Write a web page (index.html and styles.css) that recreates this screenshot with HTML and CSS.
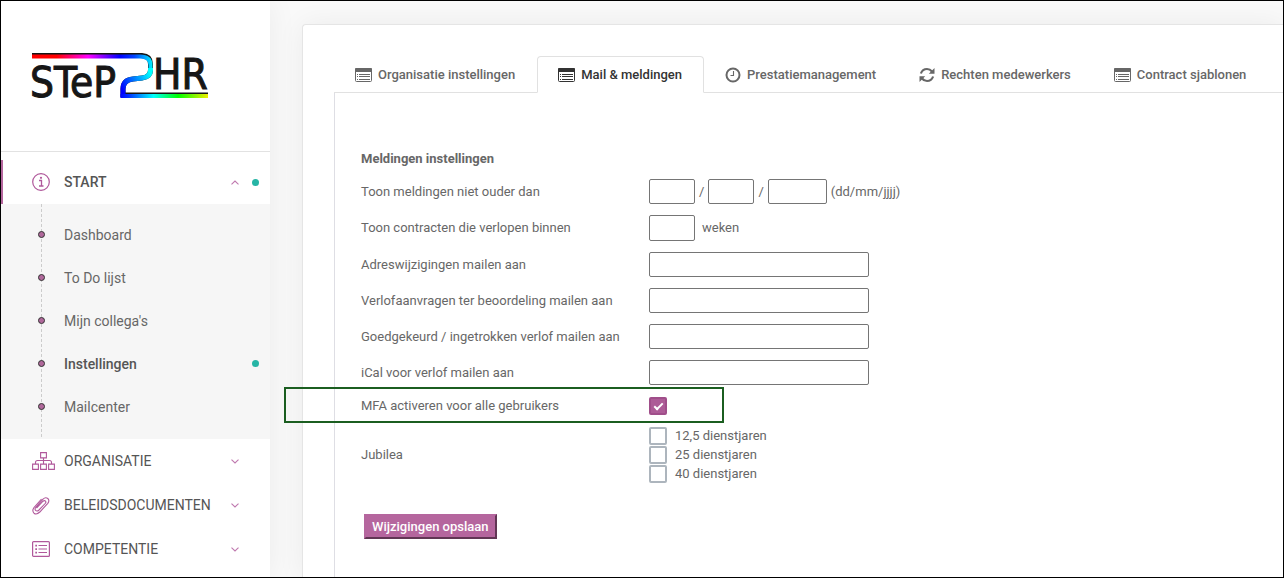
FILE: index.html
```html
<!DOCTYPE html>
<html lang="nl">
<head>
<meta charset="utf-8">
<meta name="viewport" content="width=device-width, initial-scale=1">
<title>Step2HR - Instellingen</title>
<link rel="stylesheet" href="styles.css">
</head>
<body>
<svg class="defs" aria-hidden="true">
  <symbol id="list" viewBox="0 0 17 14">
    <rect x="0.5" y="0.5" width="16" height="13" rx="1" fill="none" stroke="currentColor"/>
    <path fill="currentColor" d="M0 1Q0 0 1 0H16Q17 0 17 1V4H0ZM2 6h1v1H2zM4 6h11v1H4zM2 8h1v1H2zM4 8h11v1H4zM2 11h1v1H2zM4 11h11v1H4z"/>
  </symbol>
  <symbol id="down" viewBox="0 0 8 5">
    <path d="M0.500 0.700L4 4L7.500 0.700" fill="none" stroke="currentColor" stroke-width="1.100"/>
  </symbol>
</svg>
<div class="app">
  <aside class="sidebar">
    <a class="logo" href="#" aria-label="STEP2HR">
      <svg width="178" height="48" viewBox="0 0 178 48">
        <defs>
          <linearGradient id="top" gradientUnits="userSpaceOnUse" x1="0" y1="0" x2="122" y2="0">
            <stop offset="0" stop-color="#f00"/><stop offset=".2" stop-color="#f00"/><stop offset=".46" stop-color="#f0f"/><stop offset=".72" stop-color="#00f"/><stop offset=".84" stop-color="#04f"/><stop offset="1" stop-color="#0ff"/>
          </linearGradient>
          <linearGradient id="bottom" gradientUnits="userSpaceOnUse" x1="88" y1="0" x2="176" y2="0">
            <stop offset="0" stop-color="#00f"/><stop offset=".1" stop-color="#03f"/><stop offset=".38" stop-color="#0ff"/><stop offset=".66" stop-color="#0f0"/><stop offset="1" stop-color="#ee0"/>
          </linearGradient>
          <linearGradient id="curve" gradientUnits="userSpaceOnUse" x1="118" y1="20" x2="90" y2="36">
            <stop offset="0" stop-color="#0ff"/><stop offset="1" stop-color="#00f"/>
          </linearGradient>
        </defs>
        <text class="logo-text" x="-2" y="44">STeP</text>
        <text class="logo-text" x="121" y="36">HR</text>
        <path d="M0 2.500H110Q118.500 3 118.500 11V17Q118.500 24 110 25L101 26Q91 27 91 36V42H176" fill="none" stroke="#161616" stroke-width="5"/>
        <path d="M0 3.500H108Q118.500 3.500 118.500 12V16" fill="none" stroke="url(#top)" stroke-width="4"/>
        <path d="M118.500 15V17Q118.500 24 110 25L101 26Q91 27 91 36V44" fill="none" stroke="url(#curve)" stroke-width="5"/>
        <path d="M88.500 43H176" fill="none" stroke="url(#bottom)" stroke-width="4"/>
      </svg>
    </a>
    <nav class="nav">
      <a class="item active" href="#">
        <svg class="icon" width="18" height="18" viewBox="0 0 18 18"><circle cx="9" cy="9" r="8.300" fill="none" stroke="currentColor" stroke-width="1.200"/><path d="M7 7.500H9.500V13M7 13H11.500" fill="none" stroke="currentColor" stroke-width="1.300"/><circle cx="9" cy="4.800" r="1.100" fill="currentColor"/></svg>
        <span class="label">START</span>
        <svg class="chevron up" width="8" height="5"><use href="#down"/></svg>
        <span class="dot"></span>
      </a>
      <ul class="submenu">
        <li><a href="#">Dashboard</a></li>
        <li><a href="#">To Do lijst</a></li>
        <li><a href="#">Mijn collega's</a></li>
        <li><a class="current" href="#">Instellingen<span class="dot"></span></a></li>
        <li><a href="#">Mailcenter</a></li>
      </ul>
      <a class="item" href="#">
        <svg class="icon" width="23" height="18" viewBox="0 0 23 18"><path d="M8.600 .6H14.400V5.900H8.600ZM.6 12.100H6.400V17.400H.6ZM8.600 12.100H14.400V17.400H8.600ZM16.600 12.100H22.400V17.400H16.600ZM11.500 6V12M3.500 12V10.500Q3.500 8.500 5.500 8.500H17.500Q19.500 8.500 19.500 10.500V12" fill="none" stroke="currentColor" stroke-width="1.100"/></svg>
        <span class="label">ORGANISATIE</span>
        <svg class="chevron" width="8" height="5"><use href="#down"/></svg>
      </a>
      <a class="item" href="#">
        <svg class="icon" width="18" height="19" viewBox="0 0 18 19"><path d="M4.500 12L11 5.200Q12.500 4 13.500 5.100Q14.400 6.200 13.200 7.500L7 14Q5 15.800 3.600 14.400Q2.300 13 4 11L11 3.200Q13.400 .8 15.800 2.500Q17.900 4.500 15.800 7.300L7.800 16Q4.500 19.200 2 17.200Q-.3 14.800 2 11.500L9.500 3" fill="none" stroke="currentColor" stroke-width="1.100"/></svg>
        <span class="label">BELEIDSDOCUMENTEN</span>
        <svg class="chevron" width="8" height="5"><use href="#down"/></svg>
      </a>
      <a class="item" href="#">
        <svg class="icon" width="18" height="16" viewBox="0 0 18 16"><rect x=".6" y=".6" width="16.800" height="14.800" rx="1" fill="none" stroke="currentColor" stroke-width="1.200"/><path d="M6.500 4.500H15M6.500 8H15M6.500 11.500H15" stroke="currentColor" stroke-width="1.100"/><path d="M3.300 3.700h1.700v1.700H3.300zM3.300 7.200h1.700v1.700H3.300zM3.300 10.700h1.700v1.700H3.300z" fill="currentColor"/></svg>
        <span class="label">COMPETENTIE</span>
        <svg class="chevron" width="8" height="5"><use href="#down"/></svg>
      </a>
    </nav>
  </aside>
  <main class="main">
    <section class="card">
      <nav class="tabs">
        <a class="tab" href="#"><svg width="17" height="14"><use href="#list"/></svg>Organisatie instellingen</a>
        <a class="tab selected" href="#"><svg width="17" height="14"><use href="#list"/></svg>Mail &amp; meldingen</a>
        <a class="tab" href="#"><svg width="16" height="16" viewBox="0 0 16 16"><circle cx="8" cy="8" r="6.500" fill="none" stroke="currentColor" stroke-width="2"/><path d="M8.500 4V8.500H5.500" fill="none" stroke="currentColor" stroke-width="1.100"/></svg>Prestatiemanagement</a>
        <a class="tab" href="#"><svg width="16" height="16" viewBox="0 0 16 16"><path d="M1.900 6.500Q3.500 2 8 2Q11 2 13 4.500M14.100 9.500Q12.500 14 8 14Q5 14 3 11.500" fill="none" stroke="currentColor" stroke-width="2.200"/><path d="M15.500 1V6.700H9.800ZM.5 15V9.300H6.200Z" fill="currentColor"/></svg>Rechten medewerkers</a>
        <a class="tab" href="#"><svg width="17" height="14"><use href="#list"/></svg>Contract sjablonen</a>
      </nav>
      <form class="panel">
        <h2>Meldingen instellingen</h2>
        <div class="row">
          <label for="day">Toon meldingen niet ouder dan</label>
          <div class="fields"><input class="short" id="day" type="text" aria-label="Dag"><span>/</span><input class="short" type="text" aria-label="Maand"><span>/</span><input class="year" type="text" aria-label="Jaar"><span>(dd/mm/jjjj)</span></div>
        </div>
        <div class="row">
          <label for="weeks">Toon contracten die verlopen binnen</label>
          <div class="fields weeks"><input class="short" id="weeks" type="text"><span>weken</span></div>
        </div>
        <div class="row"><label for="address">Adreswijzigingen mailen aan</label><input class="wide" id="address" type="text"></div>
        <div class="row"><label for="review">Verlofaanvragen ter beoordeling mailen aan</label><input class="wide" id="review" type="text"></div>
        <div class="row"><label for="approved">Goedgekeurd / ingetrokken verlof mailen aan</label><input class="wide" id="approved" type="text"></div>
        <div class="row"><label for="ical">iCal voor verlof mailen aan</label><input class="wide" id="ical" type="text"></div>
        <div class="row highlight"><label for="mfa">MFA activeren voor alle gebruikers</label><input id="mfa" type="checkbox" checked></div>
        <div class="row" role="group" aria-labelledby="jubilea">
          <span id="jubilea">Jubilea</span>
          <div class="choices">
            <label><input type="checkbox">12,5 dienstjaren</label>
            <label><input type="checkbox">25 dienstjaren</label>
            <label><input type="checkbox">40 dienstjaren</label>
          </div>
        </div>
        <button class="save" type="button">Wijzigingen opslaan</button>
      </form>
    </section>
  </main>
</div>
</body>
</html>
```
FILE: styles.css
```css
*, *::before, *::after { box-sizing: border-box; }
body {
  margin: 0;
  font: 13px/20px Roboto, "Liberation Sans", sans-serif;
  color: #676767;
}
a { color: inherit; text-decoration: none; }
.defs { position: absolute; width: 0; height: 0; }
.app {
  display: flex;
  min-height: 100vh;
  border: 1px solid #000;
  background: #f9f9f9;
  overflow: hidden;
}

.sidebar {
  flex: 0 0 269px;
  background: #fff;
  box-shadow: 0 0 28px rgba(0, 0, 0, .06);
}
.logo {
  display: block;
  padding: 52px 31px 50px;
  border-bottom: 1px solid #e2e2e2;
}
.logo svg { display: block; overflow: visible; }
.logo-text {
  font: 42px "DejaVu Sans Condensed", "DejaVu Sans", sans-serif;
  fill: #161616;
  stroke: #161616;
  stroke-width: 1px;
}
.nav { padding-top: 8px; font-size: 14px; color: #555; }
.item {
  display: grid;
  grid-template-columns: 32px 1fr 8px 7px;
  align-items: center;
  height: 44px;
  padding: 0 11px 0 31px;
}
.item.active {
  padding-left: 29px;
  border-left: 2px solid #b5669e;
  font-weight: 500;
}
.icon, .chevron { color: #b0589b; }
.chevron { margin-left: -13px; opacity: .8; }
.up { transform: rotate(180deg); }
.dot { width: 7px; height: 7px; border-radius: 50%; background: #26b5a5; }
.submenu {
  margin: 0;
  padding: 9px 0 11px;
  list-style: none;
  color: #676767;
  background:
    repeating-linear-gradient(to bottom, #ccc 0 3px, transparent 3px 5px) 40px 0 / 1px 100% no-repeat,
    #f6f6f6;
}
.submenu a {
  display: flex;
  align-items: center;
  height: 43px;
  padding: 0 11px 0 37px;
}
.submenu a::before {
  content: "";
  width: 7px;
  height: 7px;
  margin-right: 19px;
  border: 1px solid #333;
  border-radius: 50%;
  background: #b0689b;
}
.submenu .current { font-weight: 500; color: #555; }
.submenu .dot { margin-left: auto; }

.main { display: grid; flex: 1; min-width: 0; padding: 23px 0 0 32px; }
.card {
  display: flex;
  flex-direction: column;
  min-width: 0;
  padding: 31px 0 0 31px;
  border: 1px solid #e5e5e5;
  border-width: 1px 0 0 1px;
  border-radius: 4px 0 0;
  background: #fff;
  box-shadow: 0 0 28px rgba(0, 0, 0, .06);
}
.tabs {
  display: flex;
  white-space: nowrap;
  border-bottom: 1px solid #e1e1e1;
}
.tab {
  display: flex;
  align-items: center;
  gap: 6px;
  height: 37px;
  padding: 0 21px 0 20px;
  margin-bottom: -1px;
  border: 1px solid transparent;
  border-radius: 4px 4px 0 0;
  font-weight: 500;
}
.selected {
  border-color: #e1e1e1 #e1e1e1 #fff;
  background: #fff;
  color: #333;
}
.panel {
  flex: 1;
  padding: 56px 26px 0;
  border-left: 1px solid #dedee4;
}
h2 { margin: 0 0 10px; font-size: 13px; line-height: 20px; font-weight: 700; }
.row {
  display: grid;
  grid-template-columns: 288px 1fr;
  align-items: center;
  margin-bottom: 11px;
}
input { margin: 0; }
input[type="text"] {
  height: 25px;
  padding: 1px 4px;
  border: 1px solid #757575;
  border-radius: 2px;
  font: inherit;
  background: #fff;
}
.fields { display: flex; align-items: center; gap: 4px; }
.weeks { gap: 7px; }
.weeks input[type="text"] { height: 26px; }
.fields .short { width: 46px; }
.fields .year { width: 59px; }
.fields span { flex: none; }
.wide { width: 220px; }
input[type="checkbox"] {
  appearance: none;
  display: grid;
  place-items: center;
  width: 18px;
  height: 18px;
  border: 2px solid #adb5bd;
  border-radius: 2px;
  background: #fff;
}
input[type="checkbox"]:checked { border-color: #a04e8a; background: #ad5c97; }
input[type="checkbox"]:checked::before {
  content: "";
  width: 9px;
  height: 5px;
  margin-bottom: 2px;
  border: solid #fff;
  border-width: 0 0 2px 2px;
  transform: rotate(-45deg);
}
.highlight { position: relative; }
.highlight::after {
  content: "";
  position: absolute;
  top: -9px;
  left: -77px;
  width: 440px;
  height: 36px;
  border: 2px solid #1b5e20;
  pointer-events: none;
}
.choices { display: grid; gap: 1px; }
.choices label { display: flex; align-items: center; gap: 8px; height: 18px; }
.save {
  height: 25px;
  margin: 20px 3px;
  padding: 0 6px;
  border: 2px outset #b5669e;
  background: #b5669e;
  color: #fff;
  font: 500 13px/20px Roboto, "Liberation Sans", sans-serif;
}
```
